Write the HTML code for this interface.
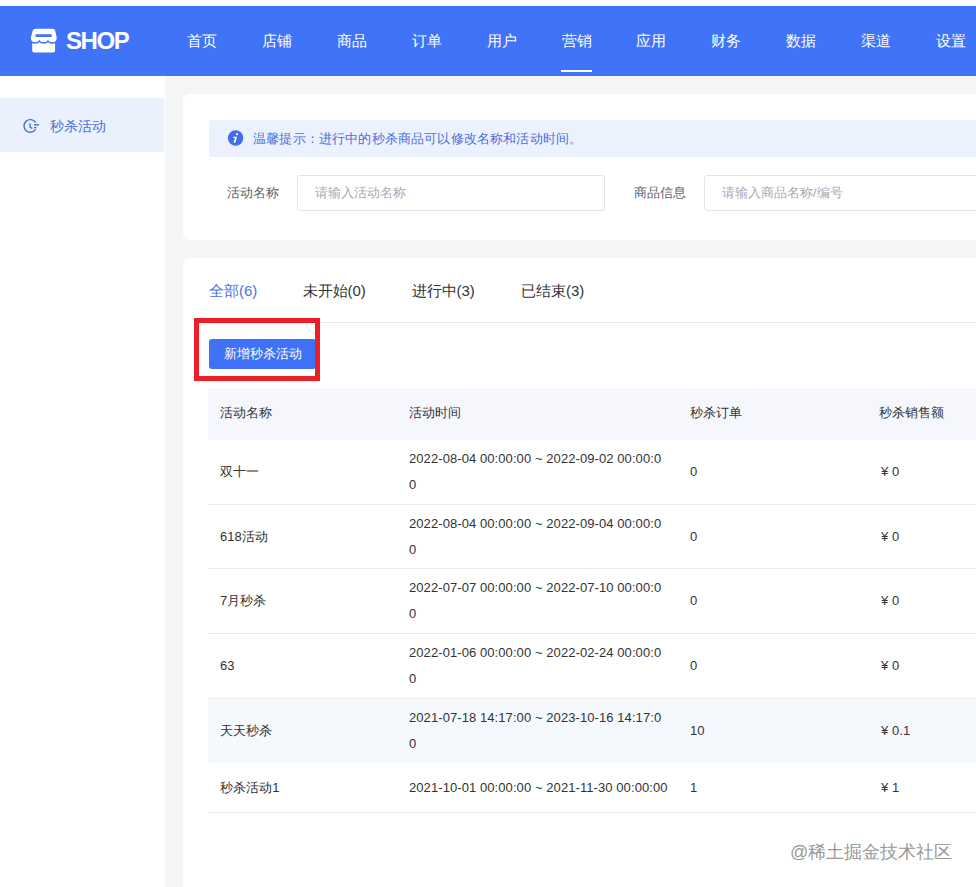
<!DOCTYPE html>
<html><head><meta charset="utf-8">
<style>
*{margin:0;padding:0;box-sizing:border-box}
html,body{width:976px;height:887px;overflow:hidden;background:#fff;font-family:"Liberation Sans",sans-serif;position:relative}
.abs{position:absolute}
#hdr{left:0;top:6px;width:976px;height:70px;background:#3f73f8}
.logo-t{left:66px;top:25px;font-size:24px;font-weight:bold;color:#fff;letter-spacing:-1.4px;line-height:32px}
.nav{top:32px;font-size:15px;color:#fff;line-height:17px;white-space:nowrap}
.uline{left:561px;top:70px;width:31px;height:2px;background:#fff}
#side{left:0;top:76px;width:165px;height:811px;background:#fff}
.side-act{left:0;top:98px;width:164px;height:54px;background:#ebf0fd}
.side-t{left:50px;top:118px;font-size:14px;line-height:16px;color:#4c6fd9}
#main{left:165px;top:76px;width:811px;height:811px;background:#f4f5f7}
.card{background:#fff;border-radius:6px}
.tip{left:209px;top:120px;width:800px;height:37px;background:#ecf1fe;border-radius:3px}
.tip-t{left:253px;top:131px;font-size:13px;line-height:15px;color:#4a6fd8;white-space:nowrap;letter-spacing:0.17px}
.lbl{font-size:13px;line-height:15px;color:#606266;white-space:nowrap}
.inp{height:36px;border:1px solid #e3e4e8;border-radius:3px;background:#fff}
.ph{font-size:13px;line-height:15px;color:#a8abb2;white-space:nowrap}
.tab{top:282px;font-size:15px;line-height:17px;color:#333;white-space:nowrap}
.btn{left:209px;top:339px;width:107px;height:30px;background:#3f72f7;border-radius:3px;color:#fff;font-size:13px;line-height:30px;text-align:center}
.redbox{left:194px;top:318px;width:126px;height:63px;border:5px solid #ea1f28}
.t{font-size:13px;line-height:15px;color:#333;white-space:nowrap}
.line{height:1px;background:#ebebeb;left:208px;width:768px}
.cell{display:flex;align-items:center;font-size:13px;line-height:26px;color:#333;white-space:nowrap;letter-spacing:0.08px}
.yen{display:inline-block;width:13px;padding-left:2px}
</style></head><body>
<div id="hdr" class="abs"></div>
<svg class="abs" style="left:27px;top:25px" width="34" height="31" viewBox="0 0 34 31">
  <rect x="5.2" y="15" width="22.9" height="12.6" rx="2.6" fill="#fff"/>
  <path d="M3.9 13.2 Q3.9 18 8 18 Q11.6 18 12.4 15.5 Q13.2 18 16.7 18 Q20.2 18 21 15.5 Q21.8 18 25.6 18 Q29.8 18 29.8 13.2" fill="none" stroke="#3f73f8" stroke-width="1.5"/>
  <path d="M8.3 3.8 L25.6 3.8 Q27.6 3.8 28.2 5.8 L29.7 12.6 Q29.9 17.1 25.6 17.1 Q21.7 17.1 21 14.6 Q20.3 17.1 16.7 17.1 Q13.1 17.1 12.4 14.6 Q11.7 17.1 8 17.1 Q3.6 17.1 3.9 12.6 L5.7 5.8 Q6.3 3.8 8.3 3.8 Z" fill="#fff"/>
  <rect x="8.2" y="9.2" width="16.8" height="2.7" rx="1.3" fill="#3f73f8"/>
</svg>
<div class="abs logo-t">SHOP</div>
<div class="abs nav" style="left:187px">首页</div>
<div class="abs nav" style="left:262px">店铺</div>
<div class="abs nav" style="left:337px">商品</div>
<div class="abs nav" style="left:412px">订单</div>
<div class="abs nav" style="left:486.5px">用户</div>
<div class="abs nav" style="left:561.5px">营销</div>
<div class="abs nav" style="left:636px">应用</div>
<div class="abs nav" style="left:711px">财务</div>
<div class="abs nav" style="left:786px">数据</div>
<div class="abs nav" style="left:861px">渠道</div>
<div class="abs nav" style="left:936px">设置</div>
<div class="abs uline"></div>

<div id="side" class="abs"></div>
<div class="abs side-act"></div>
<svg class="abs" style="left:20px;top:114px" width="24" height="24" viewBox="0 0 24 24">
  <path d="M15.6 8.5 A6.3 6.3 0 1 0 15.6 15.3" fill="none" stroke="#4c6fd9" stroke-width="1.4"/>
  <path d="M10 9.3 L10 13 L12.3 14.4" fill="none" stroke="#4c6fd9" stroke-width="1.4"/>
  <rect x="14" y="10.1" width="5" height="1.5" fill="#4c6fd9"/>
  <rect x="14" y="13" width="2.5" height="1.3" fill="#4c6fd9"/>
</svg>
<div class="abs side-t">秒杀活动</div>

<div id="main" class="abs"></div>
<div class="abs card" style="left:183px;top:94px;width:820px;height:146px"></div>
<div class="abs tip"></div>
<svg class="abs" style="left:224px;top:126px" width="24" height="24" viewBox="0 0 24 24">
  <circle cx="11.6" cy="12" r="7.7" fill="#3f6ee8"/>
  <circle cx="13" cy="8.2" r="1.1" fill="#fff"/>
  <path d="M9.4 10.8 L13 10.8 L11.4 16.7 L9.6 16.7 L10.9 11.9 L9.1 11.9 Z" fill="#fff"/>
</svg>
<div class="abs tip-t">温馨提示：进行中的秒杀商品可以修改名称和活动时间。</div>
<div class="abs lbl" style="left:227px;top:185px">活动名称</div>
<div class="abs inp" style="left:297px;top:175px;width:308px"></div>
<div class="abs ph" style="left:315px;top:185px">请输入活动名称</div>
<div class="abs lbl" style="left:634px;top:185px">商品信息</div>
<div class="abs inp" style="left:704px;top:175px;width:300px"></div>
<div class="abs ph" style="left:722px;top:185px">请输入商品名称/编号</div>

<div class="abs card" style="left:183px;top:258px;width:820px;height:650px"></div>
<div class="abs tab" style="left:209px;color:#4a73e6">全部(6)</div>
<div class="abs tab" style="left:302.5px">未开始(0)</div>
<div class="abs tab" style="left:411.5px">进行中(3)</div>
<div class="abs tab" style="left:521px">已结束(3)</div>
<div class="abs line" style="left:209px;top:322px;background:#e9e9e9"></div>
<div class="abs btn">新增秒杀活动</div>
<div class="abs redbox"></div>

<div class="abs" style="left:208px;top:387.5px;width:780px;height:52.5px;background:#f5f7fd;border-radius:3px 0 0 0"></div>
<div class="abs" style="left:208px;top:699px;width:780px;height:64px;background:#f5f8fd"></div>
<div class="abs t" style="left:220px;top:405px">活动名称</div>
<div class="abs t" style="left:409px;top:405px">活动时间</div>
<div class="abs t" style="left:690px;top:405px">秒杀订单</div>
<div class="abs t" style="left:879px;top:405px">秒杀销售额</div>

<div class="abs line" style="top:504px"></div>
<div class="abs line" style="top:568px"></div>
<div class="abs line" style="top:633px"></div>
<div class="abs line" style="top:698px"></div>
<div class="abs line" style="top:812px"></div>
<div class="abs cell" style="left:220px;top:440px;height:64px"><div>双十一</div></div>
<div class="abs cell" style="left:409px;top:440px;height:64px"><div>2022-08-04 00:00:00 ~ 2022-09-02 00:00:0<br>0</div></div>
<div class="abs cell" style="left:690px;top:440px;height:64px"><div>0</div></div>
<div class="abs cell" style="left:879px;top:440px;height:64px"><div><span class="yen">¥</span>0</div></div>
<div class="abs cell" style="left:220px;top:505px;height:63px"><div>618活动</div></div>
<div class="abs cell" style="left:409px;top:505px;height:63px"><div>2022-08-04 00:00:00 ~ 2022-09-04 00:00:0<br>0</div></div>
<div class="abs cell" style="left:690px;top:505px;height:63px"><div>0</div></div>
<div class="abs cell" style="left:879px;top:505px;height:63px"><div><span class="yen">¥</span>0</div></div>
<div class="abs cell" style="left:220px;top:569px;height:64px"><div>7月秒杀</div></div>
<div class="abs cell" style="left:409px;top:569px;height:64px"><div>2022-07-07 00:00:00 ~ 2022-07-10 00:00:0<br>0</div></div>
<div class="abs cell" style="left:690px;top:569px;height:64px"><div>0</div></div>
<div class="abs cell" style="left:879px;top:569px;height:64px"><div><span class="yen">¥</span>0</div></div>
<div class="abs cell" style="left:220px;top:634px;height:64px"><div>63</div></div>
<div class="abs cell" style="left:409px;top:634px;height:64px"><div>2022-01-06 00:00:00 ~ 2022-02-24 00:00:0<br>0</div></div>
<div class="abs cell" style="left:690px;top:634px;height:64px"><div>0</div></div>
<div class="abs cell" style="left:879px;top:634px;height:64px"><div><span class="yen">¥</span>0</div></div>
<div class="abs cell" style="left:220px;top:699px;height:64px"><div>天天秒杀</div></div>
<div class="abs cell" style="left:409px;top:699px;height:64px"><div>2021-07-18 14:17:00 ~ 2023-10-16 14:17:0<br>0</div></div>
<div class="abs cell" style="left:690px;top:699px;height:64px"><div>10</div></div>
<div class="abs cell" style="left:879px;top:699px;height:64px"><div><span class="yen">¥</span>0.1</div></div>
<div class="abs cell" style="left:220px;top:764px;height:48px"><div>秒杀活动1</div></div>
<div class="abs cell" style="left:409px;top:764px;height:48px"><div>2021-10-01 00:00:00 ~ 2021-11-30 00:00:00</div></div>
<div class="abs cell" style="left:690px;top:764px;height:48px"><div>1</div></div>
<div class="abs cell" style="left:879px;top:764px;height:48px"><div><span class="yen">¥</span>1</div></div>
<div class="abs" style="left:790px;top:842px;font-size:18px;line-height:21px;color:#999;white-space:nowrap;text-shadow:0 0 1px #fff,0 0 1px #fff">@稀土掘金技术社区</div>
</body></html>
